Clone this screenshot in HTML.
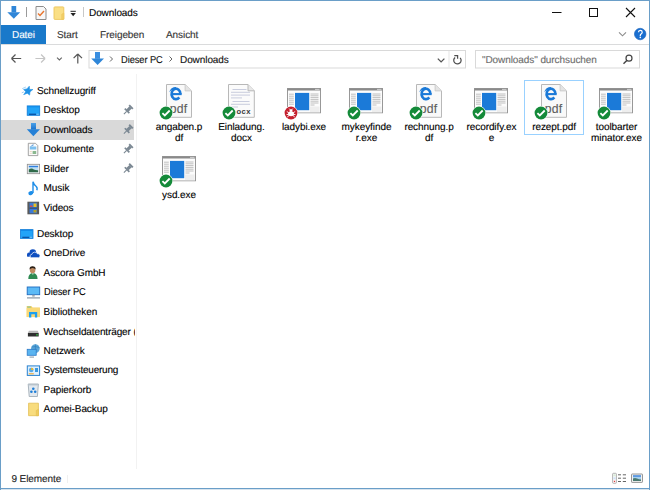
<!DOCTYPE html>
<html><head><meta charset="utf-8">
<style>
*{margin:0;padding:0;box-sizing:border-box}
html,body{width:650px;height:490px;overflow:hidden;background:#fff}
body{position:relative;font-family:"Liberation Sans",sans-serif;font-size:10px;color:#000}
.a{position:absolute}
.t{position:absolute;white-space:nowrap;line-height:10px;font-size:10px;letter-spacing:-0.08px;text-rendering:geometricPrecision;margin-top:1px;-webkit-text-stroke:0.12px currentColor}
svg{position:absolute;overflow:visible}
.lbl{position:absolute;width:62px;text-align:center;line-height:11.3px;font-size:10px;letter-spacing:-0.08px;color:#000;text-rendering:geometricPrecision;margin-top:1px;-webkit-text-stroke:0.12px currentColor}
</style></head><body>
<!-- window border -->
<div class="a" style="left:0;top:0;width:650px;height:1px;background:#6a9ec8"></div>
<div class="a" style="left:0;top:0;width:1px;height:490px;background:#6a9ec8"></div>
<div class="a" style="left:649px;top:0;width:1px;height:490px;background:#6a9ec8"></div>
<div class="a" style="left:0;top:488px;width:650px;height:1px;background:#6a9ec8"></div>
<div class="a" style="left:1px;top:489px;width:648px;height:1px;background:#d8e4ee"></div>

<!-- title bar -->
<svg style="left:0;top:0" width="650" height="25">
  <!-- down arrow -->
  <rect x="11.5" y="6" width="4.7" height="6.5" fill="#2f86d8"/>
  <polygon points="7.3,12.3 20.2,12.3 13.8,18.8" fill="#2f86d8"/>
  <rect x="26" y="7" width="1" height="10" fill="#9a9a9a"/>
  <!-- properties doc -->
  <path d="M36,6.5 h7.5 l2.5,2.5 v10.5 h-10 z" fill="#f7f7f7" stroke="#8c8c8c" stroke-width="1"/>
  <path d="M38,13.5 l2,2 l4,-4.5" fill="none" stroke="#e8742c" stroke-width="1.4"/>
  <!-- folder -->
  <rect x="54" y="6.9" width="9.8" height="12.5" rx="0.8" fill="#fadf85" stroke="#ecc55a" stroke-width="0.9"/>
  <path d="M61.8,14.2 l2,-1.1 v6.3 h-2 z" fill="#f3d06a" stroke="#ecc55a" stroke-width="0.7"/>
  <!-- dropdown -->
  <rect x="70.5" y="10.8" width="5.3" height="1" fill="#222"/>
  <polygon points="70.5,13 75.8,13 73.15,16.2" fill="#222"/>
  <rect x="83" y="7" width="1" height="10" fill="#c8c8c8"/>
  <!-- controls -->
  <rect x="552" y="12" width="9.5" height="1" fill="#111"/>
  <rect x="589.5" y="8.5" width="8" height="8" fill="none" stroke="#111" stroke-width="1"/>
  <path d="M626,8 L635,17 M635,8 L626,17" stroke="#111" stroke-width="1.1"/>
</svg>
<div class="t" style="left:89px;top:7.7px;color:#000">Downloads</div>

<!-- ribbon tabs -->
<div class="a" style="left:1px;top:25px;width:45px;height:19px;background:#1979ca"></div>
<div class="t" style="left:12px;top:29.6px;color:#fff">Datei</div>
<div class="t" style="left:57px;top:30px;color:#333">Start</div>
<div class="t" style="left:100px;top:30px;color:#333">Freigeben</div>
<div class="t" style="left:166px;top:30px;color:#333">Ansicht</div>
<div class="a" style="left:1px;top:44px;width:648px;height:1px;background:#dadbdc"></div>
<svg style="left:0;top:25" width="650" height="20">
  <path d="M619,7.4 l3.5,3.4 l3.5,-3.4" fill="none" stroke="#8c8c8c" stroke-width="1.15"/>
  <circle cx="640.2" cy="9.05" r="5.75" fill="#1a6fd0" stroke="#1660b8" stroke-width="0.6"/><path d="M638.5,7.3 q0,-1.9 1.8,-1.9 q1.9,0 1.9,1.8 q0,1.2 -1.1,1.8 q-0.8,0.5 -0.8,1.6 v0.5" fill="none" stroke="#fff" stroke-width="1.25"/><circle cx="640.3" cy="12.4" r="0.8" fill="#fff"/>
</svg>


<!-- address row -->
<svg style="left:0;top:45" width="650" height="30">
  <path d="M11.5,13.5 h9.7 M11.5,13.5 l4,-4 M11.5,13.5 l4,4" fill="none" stroke="#555" stroke-width="1.2"/>
  <path d="M35.4,13.5 h9.7 M45.1,13.5 l-4,-4 M45.1,13.5 l-4,4" fill="none" stroke="#c4c4c4" stroke-width="1.2"/>
  <path d="M57,12.6 l2.4,2.4 l2.4,-2.4" fill="none" stroke="#666" stroke-width="1.1"/>
  <path d="M77.8,9 v9.5 M77.8,9 l-4.2,4.2 M77.8,9 l4.2,4.2" fill="none" stroke="#555" stroke-width="1.2"/>
  <!-- address box -->
  <rect x="89" y="5.5" width="376.5" height="17.5" fill="#fff" stroke="#d9d9d9" stroke-width="1"/>
  <rect x="95" y="7" width="5" height="6.8" fill="#3a8ee0"/>
  <polygon points="91.2,13.5 104,13.5 97.6,20" fill="#2f86d8"/>
  <path d="M110,11.5 l2.5,2.5 l-2.5,2.5" fill="none" stroke="#666" stroke-width="1"/>
  <path d="M169.5,11.5 l2.5,2.5 l-2.5,2.5" fill="none" stroke="#666" stroke-width="1"/>
  <path d="M437.8,13.6 l3.3,3.3 l3.3,-3.3" fill="none" stroke="#555" stroke-width="1.3"/>
  <rect x="448.5" y="6" width="1" height="16.5" fill="#e5e5e5"/>
  <path d="M455.1,12.4 A3.7,3.7 0 1 0 460.15,12.8" fill="none" stroke="#505050" stroke-width="1.25"/>
  <path d="M454.3,10.6 H457.6 V13.8" fill="none" stroke="#505050" stroke-width="1.25"/>
  <!-- search box -->
  <rect x="475.5" y="5.5" width="164" height="17.5" fill="#fff" stroke="#d9d9d9" stroke-width="1"/>
  <circle cx="629" cy="13.2" r="3" fill="none" stroke="#444" stroke-width="1.2"/>
  <path d="M626.8,15.4 L623.5,18.8" stroke="#444" stroke-width="1.4"/>
</svg>
<div class="t" style="left:120.7px;top:54.5px;color:#111;transform:scaleX(0.93);transform-origin:0 0">Dieser PC</div>
<div class="t" style="left:180px;top:54.5px;color:#111">Downloads</div>
<div class="t" style="left:482px;top:54.5px;color:#6d6d6d">"Downloads" durchsuchen</div>

<!-- nav pane -->
<div class="a" style="left:1px;top:120px;width:133px;height:19.5px;background:#d9d9d9"></div>
<div class="a" style="left:136px;top:74px;width:1px;height:395px;background:#f2f2f2"></div>
<div id="nav"></div>
<div class="t" style="left:37px;top:86.3px">Schnellzugriff</div>
<div class="t" style="left:43.6px;top:105px">Desktop</div>
<div class="t" style="left:43.6px;top:124.5px">Downloads</div>
<div class="t" style="left:43.6px;top:144px">Dokumente</div>
<div class="t" style="left:43.6px;top:163.5px">Bilder</div>
<div class="t" style="left:43.6px;top:183px">Musik</div>
<div class="t" style="left:43.6px;top:202.5px">Videos</div>
<div class="t" style="left:37px;top:228.8px">Desktop</div>
<div class="t" style="left:43.6px;top:248.3px">OneDrive</div>
<div class="t" style="left:43.6px;top:267.8px">Ascora GmbH</div>
<div class="t" style="left:43.6px;top:287.3px;transform:scaleX(0.93);transform-origin:0 0">Dieser PC</div>
<div class="t" style="left:43.6px;top:306.8px">Bibliotheken</div>
<div class="a" style="left:0;top:320px;width:135px;height:20px;overflow:hidden"><div class="t" style="left:43.6px;top:6.6px;letter-spacing:-0.12px">Wechseldatenträger (D:)</div></div>
<div class="t" style="left:43.6px;top:345.8px">Netzwerk</div>
<div class="t" style="left:43.6px;top:365.3px;letter-spacing:-0.22px">Systemsteuerung</div>
<div class="t" style="left:43.6px;top:384.8px">Papierkorb</div>
<div class="t" style="left:43.6px;top:404.3px">Aomei-Backup</div>

<svg id="navsvg" style="left:0;top:0" width="136" height="470">
  <defs>
    <g id="pin" fill="#7b8893">
      <rect x="-2.6" y="-6" width="5.2" height="1.8"/>
      <rect x="-1.6" y="-4.5" width="3.2" height="4.5"/>
      <rect x="-3.2" y="-0.4" width="6.4" height="1.7"/>
      <rect x="-0.55" y="1" width="1.1" height="4"/>
    </g>
    <linearGradient id="dlg" x1="0" y1="0" x2="0" y2="1"><stop offset="0" stop-color="#4aa0e8"/><stop offset="1" stop-color="#1a72cc"/></linearGradient>
  </defs>
  <!-- star -->
  <polygon points="29.30,86.20 29.53,89.38 32.90,89.50 30.02,91.82 29.60,95.10 27.26,93.20 24.00,94.60 25.66,91.56 23.60,89.50 26.92,88.89" fill="#1f92e6" stroke="#1f92e6" stroke-width="0.6" stroke-linejoin="round"/>
  <path d="M22.3,88.6 l3.6,-1.6 M21.8,92.8 l2,-0.9 M23,94.8 l1.2,-0.6" stroke="#8cc4f0" stroke-width="0.8"/>
  <!-- desktop -->
  <rect x="27.2" y="105.9" width="12.5" height="9.4" fill="#22a4f8" stroke="#0f7ad6" stroke-width="0.8"/>
  <rect x="27.6" y="106.3" width="11.7" height="1" fill="#128ae8"/>
  <rect x="29" y="113.6" width="7" height="1.4" fill="#0a56a8"/>
  <rect x="36.5" y="113.6" width="2.2" height="1.4" fill="#6ab8f0"/>
  <!-- pins -->
  <use href="#pin" transform="translate(127.4,110.6) rotate(45)"/>
  <use href="#pin" transform="translate(127.4,130.2) rotate(45)"/>
  <use href="#pin" transform="translate(127.4,149.7) rotate(45)"/>
  <use href="#pin" transform="translate(127.4,169.2) rotate(45)"/>
  <!-- downloads arrow -->
  <rect x="31" y="123" width="5" height="6.6" fill="url(#dlg)"/>
  <polygon points="26.8,129.2 40,129.2 33.4,136.3" fill="#2580d6"/>
  <!-- dokumente -->
  <path d="M28.3,143.3 h7.2 l2.3,2.3 v10 h-9.5 z" fill="#fbfbfb" stroke="#8e8e8e" stroke-width="0.8"/>
  <rect x="29.8" y="146.5" width="6.5" height="3" fill="#7cc0f0"/>
  <path d="M31,146.5 q1,-1.6 2.6,-1.6" stroke="#3a8ad8" stroke-width="1" fill="none"/>
  <rect x="32.6" y="151" width="3.6" height="3" fill="#8ab890"/>
  <path d="M29.8,151.5 h2 M29.8,153.3 h2" stroke="#e0c0a0" stroke-width="0.6"/>
  <!-- bilder -->
  <rect x="27.3" y="164.3" width="12.3" height="9.4" fill="#efefef" stroke="#8d8d8d" stroke-width="0.8"/>
  <rect x="28.8" y="165.8" width="9.3" height="6.4" fill="#bfe0f4"/>
  <rect x="28.8" y="165.8" width="9.3" height="1.4" fill="#2f7fe0"/>
  <path d="M28.8,172.2 v-2.8 q3,-1.8 5,0 q2,1 4.3,0.8 v2 z" fill="#2f6a4a"/>
  <!-- musik -->
  <ellipse cx="30.8" cy="193.1" rx="2.5" ry="2" fill="#1e8ee8" transform="rotate(-20 30.8 193.1)"/>
  <path d="M33,193 v-11.2 q0.8,2.8 3,4.5 q1.8,1.5 0.8,4" fill="none" stroke="#1e8ee8" stroke-width="1.4"/>
  <!-- videos -->
  <rect x="27.4" y="201.7" width="11.7" height="12.6" fill="#5a5a5a"/>
  <rect x="29.5" y="202.7" width="7.5" height="10.6" fill="#3a7ad8"/>
  <rect x="33.5" y="203.5" width="3" height="3.5" fill="#e8c020"/>
  <rect x="29.5" y="207.7" width="7.5" height="0.8" fill="#333"/>
  <rect x="33.5" y="210" width="3" height="2.5" fill="#b8a020"/>
  <rect x="30" y="205.5" width="2.5" height="1.5" fill="#d84a4a"/>
  <!-- root desktop -->
  <rect x="20.5" y="229.6" width="12.5" height="8.8" fill="#22a4f8" stroke="#0f7ad6" stroke-width="0.8"/>
  <rect x="20.9" y="230" width="11.7" height="1" fill="#128ae8"/>
  <rect x="22.3" y="236.7" width="7" height="1.3" fill="#0a56a8"/>
  <rect x="29.8" y="236.7" width="2.2" height="1.3" fill="#6ab8f0"/>
  <!-- onedrive -->
  <g fill="#0f4fc0">
   <circle cx="29" cy="254.6" r="2"/>
   <circle cx="32.8" cy="252.6" r="3.3"/>
   <rect x="27" y="254.6" width="6" height="2" />
  </g>
  <g fill="#0f4fc0" stroke="#fff" stroke-width="0.7">
   <path d="M31.2,257.7 a1.7,1.7 0 0 1 0.6,-3.3 a3,3 0 0 1 5.6,-0.6 a2,2 0 0 1 1.2,3.9 z"/>
  </g>
  <!-- ascora -->
  <path d="M28.3,279 q0,-5 3.8,-6 h1.5 q3.9,1 4,6 z" fill="#2e8a52"/>
  <path d="M32,273.2 l0.9,1.8 l0.9,-1.8 z" fill="#e8f0e8"/>
  <ellipse cx="32.6" cy="270" rx="2.8" ry="3.3" fill="#c08a60"/>
  <path d="M29.6,269.5 q-0.3,-3.4 3,-3.3 q3.2,0 3,3.3 q-1,-1.5 -3,-1.5 q-2,0 -3,1.5 z" fill="#2a2018"/>
  <!-- dieser pc -->
  <rect x="27.2" y="287" width="12.5" height="7.7" fill="#5cbaf6" stroke="#1e6cc0" stroke-width="0.9"/>
  <rect x="32.2" y="294.8" width="2.5" height="1.8" fill="#9aa6b0"/>
  <rect x="27" y="297.3" width="13" height="1.2" fill="#8a98a6"/>
  <!-- bibliotheken -->
  <path d="M26.7,306 h4.5 l1.3,1.5 h7.4 v9.6 h-13.2 z" fill="#f6cf60"/>
  <rect x="27.3" y="306.5" width="3.5" height="1.2" fill="#8ac8a0"/>
  <rect x="26.7" y="308" width="13.2" height="9.1" fill="#f9d978"/>
  <path d="M29,317.5 v-5.5 h8.2 v5.5 h-2.3 v-3.2 h-3.6 v3.2 z" fill="#1ea0f0"/>
  <!-- wechseldatentraeger -->
  <path d="M28.9,330.8 h8.8 l1,2.2 h-10.8 z" fill="#b8b8b8"/>
  <rect x="27.9" y="333" width="10.8" height="3.5" fill="#2e2e2e"/>
  <rect x="36.2" y="334.2" width="1.6" height="1.3" fill="#30c040"/>
  <!-- netzwerk -->
  <circle cx="35.4" cy="348.6" r="4.3" fill="#5aa6d8"/>
  <path d="M31.5,347 q4,-1 8,0.5 M35.4,344.3 v8.5" stroke="#2a78b8" stroke-width="0.6" fill="none"/>
  <rect x="27.2" y="349.3" width="9" height="6" fill="#5ab4f0" stroke="#2a7ac8" stroke-width="0.8"/>
  <rect x="29.5" y="356.5" width="4.5" height="1.2" fill="#9aa8b4"/>
  <!-- systemsteuerung -->
  <rect x="27.3" y="365.9" width="12.3" height="9.5" fill="#dff0fc" stroke="#2a82d0" stroke-width="1"/>
  <circle cx="31.2" cy="370" r="2.3" fill="#5aaae8"/>
  <path d="M31.2,370 v-2.3 a2.3,2.3 0 0 1 2.3,2.3 z" fill="#f0b820"/>
  <rect x="35" y="368" width="3" height="4" fill="#3a9ae0"/>
  <rect x="28.8" y="373.3" width="5" height="1" fill="#f0a020"/>
  <!-- papierkorb -->
  <path d="M28.2,384 h10.2 l-1,12.5 h-8.2 z" fill="#e2e8ee" stroke="#98a4ae" stroke-width="0.8"/>
  <rect x="28.2" y="384" width="10.2" height="1.4" fill="#b8c2ca"/>
  <circle cx="33.3" cy="388.8" r="1.3" fill="#1e7ed8"/>
  <circle cx="31.4" cy="391.8" r="1.3" fill="#1e7ed8"/>
  <circle cx="35.2" cy="391.8" r="1.3" fill="#1e7ed8"/>
  <!-- aomei -->
  <path d="M28.6,403.2 h9.8 v12.5 h-9.8 z" fill="#f8dc7e" stroke="#e2be50" stroke-width="0.8"/>
  <path d="M36.3,410.5 l2.1,-1.2 v6.4 h-2.1 z" fill="#f0cc60" stroke="#e2be50" stroke-width="0.6"/>
</svg>

<!-- status bar -->
<div class="t" style="left:11.4px;top:474px;color:#1e1e1e">9 Elemente</div>
<div class="a" style="left:67px;top:475px;width:1px;height:8px;background:#f0f0f0"></div>
<svg style="left:0;top:0" width="650" height="490">
  <rect x="612.6" y="473.3" width="3.8" height="10" rx="0.8" fill="#fafafa" stroke="#a0a0a0" stroke-width="0.8"/>
  <rect x="613.4" y="474.3" width="2.2" height="2" fill="#d8ecd8"/>
  <rect x="613.4" y="477.3" width="2.2" height="2" fill="#cfe2f8"/>
  <rect x="613.4" y="480.4" width="2.2" height="2" fill="#f8d8d8"/><circle cx="614.5" cy="481.4" r="0.6" fill="#e04040"/>
  <path d="M618,474.8 h3 M622.8,474.8 h3.2 M618,478.2 h3 M622.8,478.2 h3.2 M618,481.5 h3 M622.8,481.5 h3.2" stroke="#666" stroke-width="1"/>
  <rect x="631.5" y="474" width="11" height="8.4" rx="0.6" fill="#f2f2f2" stroke="#8a8a8a" stroke-width="0.9"/>
  <rect x="633" y="475.4" width="8" height="5.6" fill="#a8d0f0"/>
  <path d="M633,481 v-2.5 q2,-1 4,0 q2,0.8 4,1 v1.5 z" fill="#4a7a70"/>
  <rect x="633" y="475.4" width="8" height="1.2" fill="#2f78d8"/>
</svg>

<!-- content -->
<div class="a" style="left:524px;top:80px;width:60px;height:55px;border:1px solid #99d1ff"></div>
<div id="content"><svg width="0" height="0" style="position:absolute"><defs>
<symbol id="pdf" viewBox="0 0 26 34" width="26" height="34">
 <path d="M0.5,0.5 h18.6 l6.4,6.4 v26.4 h-25 z" fill="#f9f9f9" stroke="#b8b8b8" stroke-width="1"/>
 <path d="M19.1,0.5 v6.4 h6.4" fill="#e4e4e4" stroke="#c4c4c4" stroke-width="0.8"/>
 <g transform="translate(0,-0.5)"><path d="M14.4,10.3 A4.4,5.2 0 1 0 13.3,13.9" fill="none" stroke="#1b7ad8" stroke-width="2.6"/>
 <path d="M5.6,10.6 H15.7" stroke="#1b7ad8" stroke-width="2.1"/>
 <path d="M3.2,8.8 Q4.6,3.4 10.2,3.4 L10,5 Q6,5.2 3.2,8.8 z" fill="#1b7ad8"/></g>
 <text x="3.7" y="28.7" font-family="Liberation Sans" font-size="12.2" letter-spacing="0.25" fill="#5e5e5e" stroke="#5e5e5e" stroke-width="0.15">pdf</text>
</symbol>
<symbol id="doc" viewBox="0 0 27 34" width="27" height="34">
 <path d="M0.5,0.5 h19.5 l6.3,6.3 v26.5 h-25.8 z" fill="#fbfbfb" stroke="#b8b8b8" stroke-width="1"/>
 <path d="M20,0.5 v6.3 h6.3" fill="#e8e8e8" stroke="#b8b8b8" stroke-width="1"/>
 <g stroke="#c3c7da" stroke-width="0.9">
  <path d="M4.5,5.5 h14 M3,8.3 h19 M3,11.1 h19 M3,13.9 h11 M4.5,17.5 h17 M3,20.3 h19 M3,23 h7"/>
 </g>
 <text x="8.4" y="30.2" font-family="Liberation Sans" font-weight="bold" font-size="7.6" letter-spacing="0.5" fill="#3a3a3a">ocx</text>
</symbol>
<symbol id="exe" viewBox="0 0 34 25.5" width="34" height="25.5">
 <rect x="0.5" y="0.5" width="33" height="24.5" fill="#fcfcfc" stroke="#989898" stroke-width="1"/>
 <rect x="0.5" y="0.5" width="33" height="2" fill="#8a8a8a"/><rect x="28" y="0.9" width="4.5" height="1.2" fill="#c8c8c8"/>
 <rect x="8" y="4.9" width="14.2" height="17.3" fill="#1b7ad8"/>
 <g stroke="#b9b9b9" stroke-width="0.9">
  <path d="M2,6.2 h4.8 M2,8.2 h4.8 M2,10.2 h4.8 M2,12.2 h4.8 M2,14.2 h4.8 M2,16.2 h4.8"/>
  <path d="M23.5,6 h8 M23.5,7.8 h8 M23.5,9.6 h8 M23.5,11.4 h8 M23.5,13.2 h8 M23.5,15 h8 M23.5,17 h4"/>
 </g>
 <rect x="23" y="18.5" width="9.5" height="5.5" fill="#eeeeee"/>
</symbol>
<symbol id="ok" viewBox="0 0 14 14" width="14" height="14">
 <circle cx="7" cy="7" r="6.9" fill="#fff"/>
 <circle cx="7" cy="7" r="6.4" fill="#148a39"/>
 <path d="M3.4,7.1 l2.4,2.4 l4.9,-5" fill="none" stroke="#fff" stroke-width="1.8"/>
</symbol>
<symbol id="bug" viewBox="0 0 14 14" width="14" height="14">
 <circle cx="7" cy="7" r="6.9" fill="#fff"/>
 <circle cx="7" cy="7" r="6.4" fill="#c41f2d"/>
 <ellipse cx="7" cy="7.8" rx="3" ry="2.5" fill="#fff"/>
 <circle cx="7" cy="4.6" r="1.4" fill="#fff"/>
 <path d="M2.8,5.5 l2,1.3 M11.2,5.5 l-2,1.3 M2.6,8.5 h2 M11.4,8.5 h-2 M3.2,11 l1.8,-1.4 M10.8,11 l-1.8,-1.4 M5.2,2.6 l1,1.2 M8.8,2.6 l-1,1.2" stroke="#fff" stroke-width="0.9"/>
</symbol>
</defs></svg>
<svg style="left:165.9px;top:83.5px" width="26" height="34"><use href="#pdf"/></svg>
<svg style="left:159.4px;top:105.9px" width="14" height="14"><use href="#ok"/></svg>
<div class="lbl" style="left:148.0px;top:121.03px">angaben.p<br>df</div>
<svg style="left:228.3px;top:83.7px" width="27" height="34"><use href="#doc"/></svg>
<svg style="left:221.9px;top:105.9px" width="14" height="14"><use href="#ok"/></svg>
<div class="lbl" style="left:210.5px;top:121.03px">Einladung.<br>docx</div>
<svg style="left:286.8px;top:87.9px" width="34" height="25.5"><use href="#exe"/></svg>
<svg style="left:284.4px;top:105.9px" width="14" height="14"><use href="#bug"/></svg>
<div class="lbl" style="left:273.0px;top:121.03px">ladybi.exe</div>
<svg style="left:349.3px;top:87.9px" width="34" height="25.5"><use href="#exe"/></svg>
<svg style="left:346.9px;top:105.9px" width="14" height="14"><use href="#ok"/></svg>
<div class="lbl" style="left:335.5px;top:121.03px">mykeyfinde<br>r.exe</div>
<svg style="left:415.9px;top:83.5px" width="26" height="34"><use href="#pdf"/></svg>
<svg style="left:409.4px;top:105.9px" width="14" height="14"><use href="#ok"/></svg>
<div class="lbl" style="left:398.0px;top:121.03px">rechnung.p<br>df</div>
<svg style="left:474.3px;top:87.9px" width="34" height="25.5"><use href="#exe"/></svg>
<svg style="left:471.9px;top:105.9px" width="14" height="14"><use href="#ok"/></svg>
<div class="lbl" style="left:460.5px;top:121.03px">recordify.ex<br>e</div>
<svg style="left:540.9px;top:83.5px" width="26" height="34"><use href="#pdf"/></svg>
<svg style="left:534.4px;top:105.9px" width="14" height="14"><use href="#ok"/></svg>
<div class="lbl" style="left:523.0px;top:121.03px">rezept.pdf</div>
<svg style="left:599.3px;top:87.9px" width="34" height="25.5"><use href="#exe"/></svg>
<svg style="left:596.9px;top:105.9px" width="14" height="14"><use href="#ok"/></svg>
<div class="lbl" style="left:585.5px;top:121.03px">toolbarter<br>minator.exe</div>
<svg style="left:161.8px;top:156.2px" width="34" height="25.5"><use href="#exe"/></svg>
<svg style="left:159.4px;top:174.2px" width="14" height="14"><use href="#ok"/></svg>
<div class="lbl" style="left:148.0px;top:189.33px">ysd.exe</div></div><!--/content-->
</body></html>
